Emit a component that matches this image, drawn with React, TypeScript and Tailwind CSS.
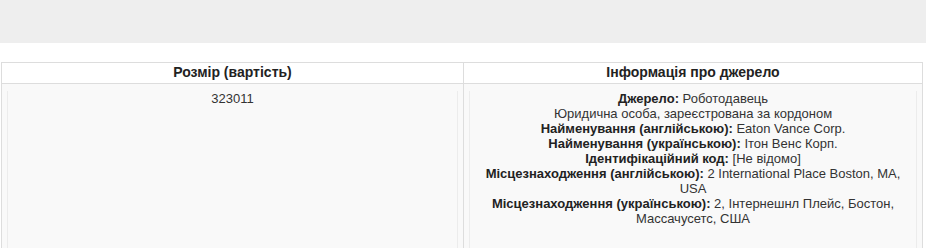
const rows: { label?: string; value: string }[] = [
  { label: "Джерело:", value: "Роботодавець" },
  { value: "Юридична особа, зареєстрована за кордоном" },
  { label: "Найменування (англійською):", value: "Eaton Vance Corp." },
  { label: "Найменування (українською):", value: "Ітон Венс Корп." },
  { label: "Ідентифікаційний код:", value: "[Не відомо]" },
  {
    label: "Місцезнаходження (англійською):",
    value: "2 International Place Boston, MA, USA",
  },
  {
    label: "Місцезнаходження (українською):",
    value: "2, Інтернешнл Плейс, Бостон, Массачусетс, США",
  },
];

export default function App() {
  return (
    <div className="min-h-[248px] bg-white font-['Liberation_Sans',Arial,sans-serif] text-[13px] leading-[15px] text-[#333]">
      <div className="h-[43px] bg-[#eeeeee]" />
      <div className="pt-[19px] pl-px">
        <table className="w-[922px] border-collapse">
          <thead>
            <tr className="bg-white">
              <th className="h-[21px] w-[462px] border border-[#dddddd] px-2 pb-[2px] text-center align-middle text-[14px] font-bold text-[#222]">
                Розмір (вартість)
              </th>
              <th className="h-[21px] border border-[#dddddd] px-2 pb-[2px] text-center align-middle text-[14px] font-bold text-[#222]">
                Інформація про джерело
              </th>
            </tr>
          </thead>
          <tbody>
            <tr className="bg-[#f9f9f9]">
              <td className="border border-[#dddddd] px-[5px] pt-[7px] pb-10 align-top">
                <div className="min-h-[190px] border-x border-[#ececec] text-center">323011</div>
              </td>
              <td className="border border-[#dddddd] px-[5px] pt-[7px] pb-10 align-top">
                <div className="min-h-[190px] border-x border-[#ececec] px-2 text-center">
                  {rows.map((r, i) => (
                    <div key={i}>
                      {r.label && <b className="text-[#222]">{r.label}</b>}
                      {r.label ? " " : ""}
                      {r.value}
                    </div>
                  ))}
                </div>
              </td>
            </tr>
          </tbody>
        </table>
      </div>
    </div>
  );
}
